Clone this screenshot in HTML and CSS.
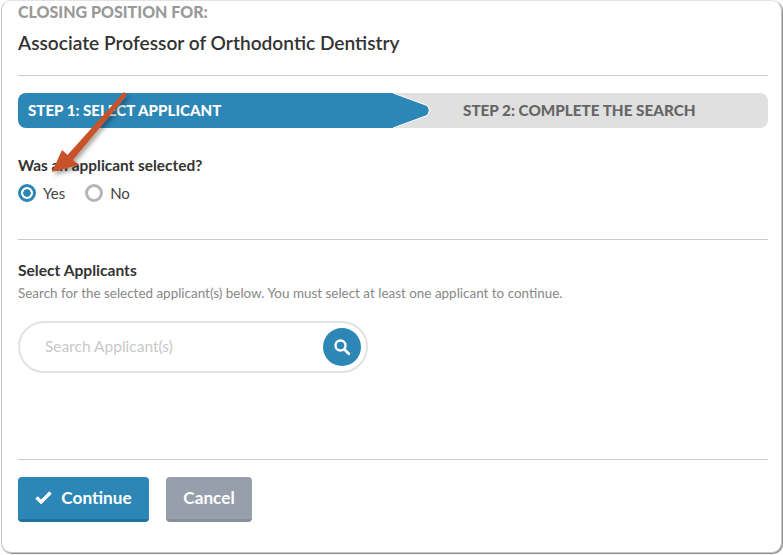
FILE: index.html
```html
<!DOCTYPE html>
<html lang="en">

<head>
  <meta charset="UTF-8" />
  <title>Close Position</title>
  <link rel="stylesheet" href="styles.css">
</head>

<body>
  <div class="panel">
    <div class="eyebrow">CLOSING POSITION FOR:</div>
    <h1 class="job-title">Associate Professor of Orthodontic Dentistry</h1>

    <div class="steps">
      <div class="step step-active">STEP 1: SELECT APPLICANT</div>
      <svg class="step-tip" width="40" height="35" viewBox="0 0 40 35">
        <path d="M0 0 L2 0 L36 12.500 Q40.500 17.500 36 22.500 L2 35 L0 35 Z" fill="#2c86b6" />
        <path d="M2 0 L36 12.500 Q40.500 17.500 36 22.500 L2 35" fill="none" stroke="#fff" stroke-width="1" />
      </svg>
      <div class="step step-next">STEP 2: COMPLETE THE SEARCH</div>
    </div>

    <div class="question">Was an applicant selected?</div>
    <div class="radios">
      <span class="radio radio-on"></span><span class="radio-label">Yes</span>
      <span class="radio"></span><span class="radio-label">No</span>
    </div>

    <div class="applicants">
      <div class="section-title">Select Applicants</div>
      <div class="help">Search for the selected applicant(s) below. You must select at least one applicant to continue.</div>
      <div class="search">
        <span class="placeholder">Search Applicant(s)</span>
        <span class="search-btn">
          <svg width="18" height="18" viewBox="0 0 18 18">
            <circle cx="7.500" cy="7.500" r="5" fill="none" stroke="#fff" stroke-width="2.400" />
            <path d="M11.500 11.500 L15.800 15.800" stroke="#fff" stroke-width="2.800" stroke-linecap="round" />
          </svg>
        </span>
      </div>
    </div>

    <div class="actions">
      <button class="btn btn-primary">
        <svg width="17" height="14" viewBox="0 0 17 14">
          <path d="M1.500 7.500 L6.200 12 L15.500 2.500" fill="none" stroke="#fff" stroke-width="3.400" />
        </svg>
        Continue
      </button>
      <button class="btn btn-cancel">Cancel</button>
    </div>
  </div>

  <!-- annotation arrow -->
  <svg class="arrow" width="783" height="555" viewBox="0 0 783 555">
    <defs>
      <filter id="shadow" x="-20%" y="-20%" width="150%" height="150%">
        <feDropShadow dx="2" dy="3" stdDeviation="2" flood-color="#000" flood-opacity="0.35" />
      </filter>
    </defs>
    <path d="M124 92 L127 95 L73 160 L79 165 L52 172 L62 150 L67.500 155 Z" fill="#c8532a" filter="url(#shadow)" />
  </svg>
</body>

</html>
```

FILE: styles.css
```css
html, body {
  margin: 0;
  background-color: #fff;
}

body {
  position: relative;
  width: 783px;
  height: 555px;
  overflow: hidden;
  font-family: "Lato", sans-serif;
  color: #333;
}

.panel {
  box-sizing: border-box;
  width: 781px;
  height: 553px;
  margin-left: 1px;
  padding: 2px 13px 0 16px;
  background-color: #fff;
  border: 1px solid #c4c4c4;
  border-top-color: #e4e4e4;
  border-radius: 10px;
  box-shadow: 1px 1px 1px #888;
}

.eyebrow {
  font-size: 16px;
  line-height: 18px;
  font-weight: 900;
  color: #999;
}

.job-title {
  margin: 10px 0 0;
  padding-bottom: 20px;
  font-size: 19.150px;
  line-height: 24px;
  font-weight: 600;
  color: #333;
  border-bottom: 1px solid #ccc;
}

.steps {
  display: flex;
  align-items: stretch;
  height: 35px;
  margin-top: 17px;
  background-color: #e0e0e0;
  border-radius: 8px;
  overflow: hidden;
}

.step {
  font-size: 15.100px;
  line-height: 35px;
  font-weight: 900;
  white-space: nowrap;
}

.step-active {
  flex: none;
  width: 363px;
  padding-left: 10px;
  background-color: #2c86b6;
  color: #fff;
}

.step-tip {
  flex: none;
  margin-right: 32px;
}

.step-next {
  font-size: 15.250px;
  color: #666;
}

.question {
  margin-top: 27px;
  font-size: 15.400px;
  line-height: 20px;
  font-weight: 700;
}

.radios {
  display: flex;
  align-items: center;
  margin-top: 8px;
  height: 20px;
  font-size: 15px;
  color: #444;
}

.radio {
  box-sizing: border-box;
  width: 18px;
  height: 18px;
  border: 3px solid #b5b5b5;
  border-radius: 50%;
  background-color: #fff;
}

.radio-on {
  border-color: #2c86b6;
  background: radial-gradient(circle, #2c86b6 0 3.5px, #fff 4px);
}

.radio-label {
  margin-left: 7px;
  margin-right: 20px;
}

.applicants {
  box-sizing: border-box;
  height: 221px;
  margin-top: 36px;
  padding-top: 20px;
  border-top: 1px solid #ccc;
  border-bottom: 1px solid #ccc;
}

.section-title {
  font-size: 15.600px;
  line-height: 20px;
  font-weight: 700;
}

.help {
  margin-top: 4px;
  font-size: 13.450px;
  line-height: 18px;
  color: #888;
}

.search {
  box-sizing: border-box;
  display: flex;
  align-items: center;
  justify-content: space-between;
  width: 350px;
  height: 52px;
  margin-top: 19px;
  padding: 0 5px 0 25px;
  border: 2px solid #e2e2e2;
  border-radius: 26px;
}

.placeholder {
  padding-bottom: 2px;
  font-size: 15.500px;
  color: #c8c8c8;
}

.search-btn {
  display: flex;
  align-items: center;
  justify-content: center;
  width: 38px;
  height: 38px;
  border-radius: 50%;
  background-color: #2c86b6;
}

.actions {
  display: flex;
  gap: 17px;
  margin-top: 17px;
}

.btn {
  display: flex;
  align-items: center;
  justify-content: center;
  gap: 9px;
  box-sizing: border-box;
  height: 45px;
  padding: 0 0 2px;
  border: 0;
  border-radius: 4px;
  font-family: "Lato", sans-serif;
  font-size: 17.200px;
  font-weight: 700;
  color: #fff;
}

.btn-primary {
  width: 131px;
  background-color: #2c86b6;
  border-bottom: 3px solid #21709c;
}

.btn-cancel {
  width: 86px;
  background-color: #979eac;
  border-bottom: 3px solid #878e9c;
}

.arrow {
  position: absolute;
  top: 0;
  left: 0;
  pointer-events: none;
}
```
